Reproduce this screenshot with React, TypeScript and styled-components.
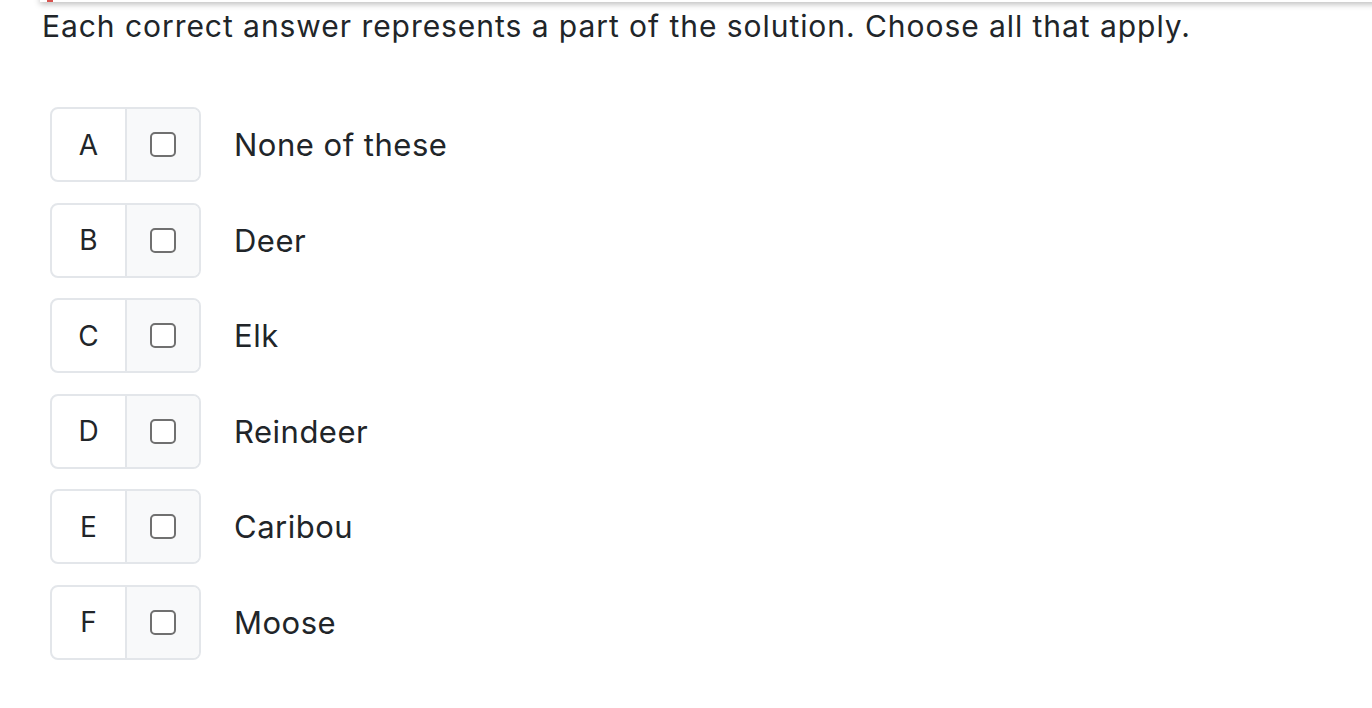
import React from "react";
import styled, { createGlobalStyle } from "styled-components";

const Global = createGlobalStyle`
  html, body { margin: 0; padding: 0; background: #fff; }
  body { font-family: Inter, "Liberation Sans", Arial, sans-serif; color: #212529; }
`;

const Page = styled.div`
  width: 1372px;
  height: 708px;
  overflow: hidden;
  position: relative;
`;

const TopBar = styled.div`
  position: absolute;
  top: -6px;
  left: 40px;
  right: -10px;
  height: 8px;
  background: #fff;
  box-shadow: 0 2px 6px rgba(0, 0, 0, 0.28);
`;

const RedMark = styled.div`
  position: absolute;
  top: 0;
  left: 47px;
  width: 6px;
  height: 2px;
  background: #d9534f;
`;

const Prompt = styled.p`
  margin: 0;
  padding: 8px 0 0 42px;
  font-size: 30px;
  letter-spacing: 0.95px;
  line-height: 36px;
  color: #212529;
  white-space: nowrap;
`;

const List = styled.div`
  display: flex;
  flex-direction: column;
  gap: 20.6px;
  padding: 63px 0 0 50px;
`;

const Row = styled.div`
  display: flex;
  align-items: center;
`;

const Choice = styled.div`
  display: flex;
  width: 151px;
  height: 75px;
  box-sizing: border-box;
  border: 2px solid #e3e6ea;
  border-radius: 8px;
  overflow: hidden;
`;

const Letter = styled.div`
  width: 73px;
  display: flex;
  align-items: center;
  justify-content: center;
  font-size: 28px;
  color: #212529;
  border-right: 2px solid #e3e6ea;
`;

const BoxCell = styled.div`
  flex: 1;
  display: flex;
  align-items: center;
  justify-content: center;
  background: #f8f9fa;
`;

const Check = styled.span`
  width: 26px;
  height: 25px;
  box-sizing: border-box;
  border: 2px solid #707070;
  border-radius: 5px;
  background: #fff;
`;

const Label = styled.span`
  margin-left: 33px;
  font-size: 31px;
  letter-spacing: 0.5px;
  color: #212529;
`;

const options = [
  ["A", "None of these"],
  ["B", "Deer"],
  ["C", "Elk"],
  ["D", "Reindeer"],
  ["E", "Caribou"],
  ["F", "Moose"],
];

export default function App() {
  return (
    <Page>
      <Global />
      <TopBar />
      <RedMark />
      <Prompt>Each correct answer represents a part of the solution. Choose all that apply.</Prompt>
      <List>
        {options.map(([l, t]) => (
          <Row key={l}>
            <Choice>
              <Letter>{l}</Letter>
              <BoxCell>
                <Check />
              </BoxCell>
            </Choice>
            <Label>{t}</Label>
          </Row>
        ))}
      </List>
    </Page>
  );
}
